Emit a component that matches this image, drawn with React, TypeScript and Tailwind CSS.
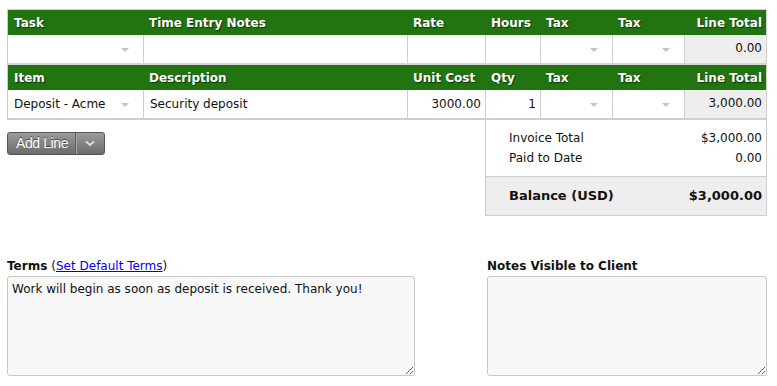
import React from 'react'

const FONT = { fontFamily: 'Verdana, "DejaVu Sans", sans-serif' }

const COLS = 'grid grid-cols-[135px_264px_78px_55px_72px_72px_82px]'

function Arrow() {
  return (
    <svg width="8" height="5" viewBox="0 0 8 5" className="absolute right-[14px] top-1/2 -translate-y-[1px]">
      <path d="M0 0 L8 0 L4 4 Z" fill="#c4c4c4" />
    </svg>
  )
}

function Head({ labels }: { labels: string[] }) {
  return (
    <div className={`${COLS} h-[25px] bg-[#217410] text-white font-bold text-[12px] [text-shadow:1px_1px_1px_#0b3a03]`}>
      {labels.map((l, i) => (
        <div
          key={i}
          className={`flex items-center px-[6px] ${i === 6 ? 'justify-end pr-[4px]' : ''}`}
        >
          {l}
        </div>
      ))}
    </div>
  )
}

type Cell = { text?: string; align?: 'left' | 'right'; arrow?: boolean; total?: boolean }

function Row({ cells }: { cells: Cell[] }) {
  return (
    <div className={`${COLS} h-[28px] bg-white text-[12px] text-[#111]`}>
      {cells.map((c, i) => (
        <div
          key={i}
          className={`relative flex px-[6px] border-[#d0d0d0] ${i > 0 ? 'border-l' : ''} ${
            c.total ? 'bg-[#eeeeee] items-start pt-[4px] justify-end pr-[4px]' : 'items-center'
          } ${c.align === 'right' ? 'justify-end pr-[4px]' : ''}`}
        >
          {c.text}
          {c.arrow && <Arrow />}
        </div>
      ))}
    </div>
  )
}

export default function App() {
  return (
    <div className="w-[777px] h-[386px] bg-white overflow-hidden pt-[9px] pl-[7px]" style={FONT}>
      <div className="w-[760px]">
        {/* line items table */}
        <div className="border-t border-l border-r border-b-2 border-[#cfcfcf]">
          <Head labels={['Task', 'Time Entry Notes', 'Rate', 'Hours', 'Tax', 'Tax', 'Line Total']} />
          <Row
            cells={[
              { arrow: true },
              {},
              {},
              {},
              { arrow: true },
              { arrow: true },
              { text: '0.00', total: true },
            ]}
          />
          <div className="h-[2px] bg-[#d6d6d6]" />
          <Head labels={['Item', 'Description', 'Unit Cost', 'Qty', 'Tax', 'Tax', 'Line Total']} />
          <Row
            cells={[
              { text: 'Deposit - Acme', arrow: true },
              { text: 'Security deposit' },
              { text: '3000.00', align: 'right' },
              { text: '1', align: 'right' },
              { arrow: true },
              { arrow: true },
              { text: '3,000.00', total: true },
            ]}
          />
        </div>

        <div className="flex justify-between">
          <div className="pt-[12px]">
            <button className="flex h-[23px] items-stretch rounded-[3px] border border-[#555] bg-gradient-to-b from-[#9a9a9a] to-[#6c6c6c] text-white text-[14px] [text-shadow:0_-1px_0_#444]" style={{ fontFamily: 'Arial, "Liberation Sans", sans-serif' }}>
              <span className="flex items-center pl-[8px] pr-[7px] tracking-[-0.4px]">Add Line</span>
              <span className="flex items-center px-[9px] border-l border-[#5a5a5a] shadow-[inset_1px_0_0_#a8a8a8]">
                <svg width="10" height="7" viewBox="0 0 10 7">
                  <path d="M1 1.5 L5 5 L9 1.5" stroke="#dcdcdc" strokeWidth="2" fill="none" />
                </svg>
              </span>
            </button>
          </div>

          <div className="w-[282px] border-l border-r border-b border-[#cfcfcf] text-[12px] text-[#111]">
            <div className="pl-[23px] pr-[4px] pt-[11px] pb-[11px] flex flex-col gap-[6px]">
              <div className="flex justify-between h-[14px] items-center">
                <span>Invoice Total</span>
                <span>$3,000.00</span>
              </div>
              <div className="flex justify-between h-[14px] items-center">
                <span>Paid to Date</span>
                <span>0.00</span>
              </div>
            </div>
            <div className="flex justify-between h-[39px] items-center bg-[#eeeeee] border-t border-[#cfcfcf] pl-[23px] pr-[4px] font-bold text-[13px]">
              <span>Balance (USD)</span>
              <span>$3,000.00</span>
            </div>
          </div>
        </div>

        {/* terms and notes */}
        <div className="flex justify-between mt-[42px] text-[12px] text-[#111]">
          <div className="w-[408px]">
            <div className="h-[17px] flex items-end mb-[1px]">
              <span className="font-bold">Terms</span>
              <span className="ml-[4px]">
                (<a href="#" className="text-[#0000ee] underline">Set Default Terms</a>)
              </span>
            </div>
            <textarea
              defaultValue="Work will begin as soon as deposit is received. Thank you!"
              className="block w-[408px] h-[100px] rounded-[3px] border border-[#c8c8c8] bg-[#f8f8f8] px-[4px] py-[3px] text-[12px] text-[#111] outline-none"
              style={FONT}
            />
          </div>
          <div className="w-[280px]">
            <div className="h-[17px] flex items-end mb-[1px] font-bold">Notes Visible to Client</div>
            <textarea
              className="block w-[280px] h-[100px] rounded-[3px] border border-[#c8c8c8] bg-[#f8f8f8] px-[4px] py-[3px] text-[12px] outline-none"
              style={FONT}
            />
          </div>
        </div>
      </div>
    </div>
  )
}
